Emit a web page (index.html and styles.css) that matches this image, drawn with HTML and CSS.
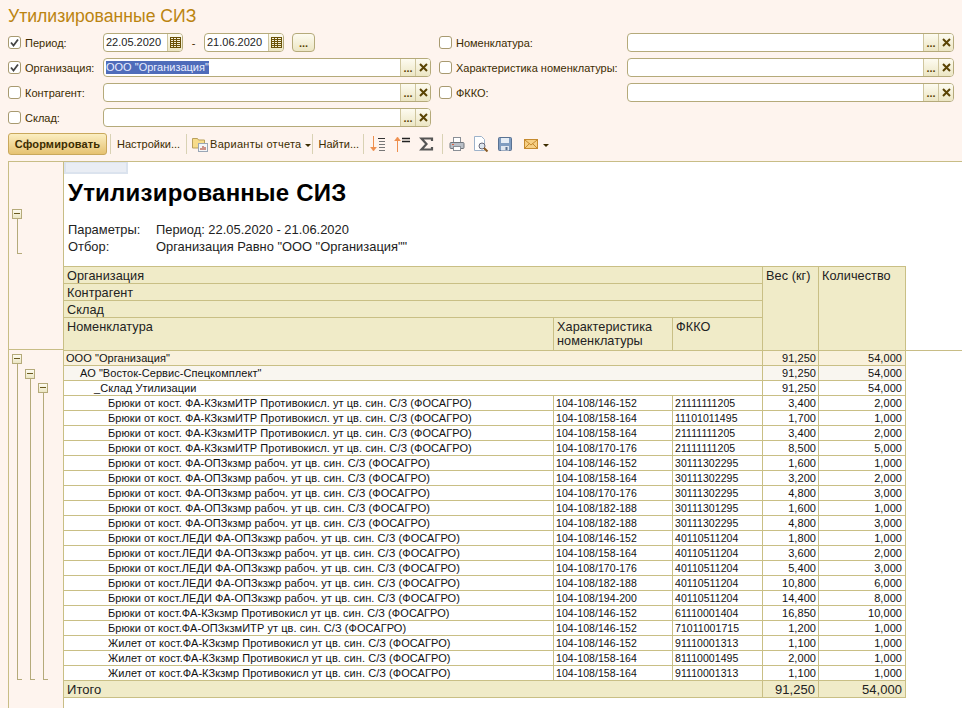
FILE: index.html
```html
<!DOCTYPE html>
<html lang="ru">
<head>
<meta charset="utf-8">
<title>Утилизированные СИЗ</title>
<link rel="stylesheet" href="styles.css">
</head>
<body>
<h1 class="page-title">Утилизированные СИЗ</h1>

<form class="filters">
  <div class="f-col">
    <div class="f-row">
      <span class="chk on"><svg viewBox="0 0 11 11"><path d="M2 5.500l2.500 3L9 2.500" fill="none" stroke="#444" stroke-width="1.800"/></svg></span>
      <label class="lbl">Период:</label>
      <span class="field date"><span class="val">22.05.2020</span><span class="fbtn cal"><svg viewBox="0 0 11 11"><path d="M0 .5h11M0 2.500h11M0 4.500h11M0 6.500h11M0 8.500h11M0 10.500h11M.5 0v11M3.500 0v11M6.500 0v11M10.500 0v11" fill="none" stroke="#6b5208"/></svg></span></span>
      <span class="dash">-</span>
      <span class="field date"><span class="val">21.06.2020</span><span class="fbtn cal"><svg viewBox="0 0 11 11"><path d="M0 .5h11M0 2.500h11M0 4.500h11M0 6.500h11M0 8.500h11M0 10.500h11M.5 0v11M3.500 0v11M6.500 0v11M10.500 0v11" fill="none" stroke="#6b5208"/></svg></span></span>
      <button type="button" class="more">...</button>
    </div>
    <div class="f-row">
      <span class="chk on"><svg viewBox="0 0 11 11"><path d="M2 5.500l2.500 3L9 2.500" fill="none" stroke="#444" stroke-width="1.800"/></svg></span>
      <label class="lbl">Организация:</label>
      <span class="field wide"><span class="val"><span class="sel">ООО "Организация"</span></span><span class="fbtn dots">...</span><span class="fbtn x"><svg viewBox="0 0 9 9"><path d="M1 1l7 7M8 1L1 8" fill="none" stroke="#5a4404" stroke-width="2"/></svg></span></span>
    </div>
    <div class="f-row">
      <span class="chk"></span>
      <label class="lbl">Контрагент:</label>
      <span class="field wide"><span class="val"></span><span class="fbtn dots">...</span><span class="fbtn x"><svg viewBox="0 0 9 9"><path d="M1 1l7 7M8 1L1 8" fill="none" stroke="#5a4404" stroke-width="2"/></svg></span></span>
    </div>
    <div class="f-row">
      <span class="chk"></span>
      <label class="lbl">Склад:</label>
      <span class="field wide"><span class="val"></span><span class="fbtn dots">...</span><span class="fbtn x"><svg viewBox="0 0 9 9"><path d="M1 1l7 7M8 1L1 8" fill="none" stroke="#5a4404" stroke-width="2"/></svg></span></span>
    </div>
  </div>
  <div class="f-col right">
    <div class="f-row">
      <span class="chk"></span>
      <label class="lbl">Номенклатура:</label>
      <span class="field wide"><span class="val"></span><span class="fbtn dots">...</span><span class="fbtn x"><svg viewBox="0 0 9 9"><path d="M1 1l7 7M8 1L1 8" fill="none" stroke="#5a4404" stroke-width="2"/></svg></span></span>
    </div>
    <div class="f-row">
      <span class="chk"></span>
      <label class="lbl">Характеристика номенклатуры:</label>
      <span class="field wide"><span class="val"></span><span class="fbtn dots">...</span><span class="fbtn x"><svg viewBox="0 0 9 9"><path d="M1 1l7 7M8 1L1 8" fill="none" stroke="#5a4404" stroke-width="2"/></svg></span></span>
    </div>
    <div class="f-row">
      <span class="chk"></span>
      <label class="lbl">ФККО:</label>
      <span class="field wide"><span class="val"></span><span class="fbtn dots">...</span><span class="fbtn x"><svg viewBox="0 0 9 9"><path d="M1 1l7 7M8 1L1 8" fill="none" stroke="#5a4404" stroke-width="2"/></svg></span></span>
    </div>
  </div>
</form>

<div class="toolbar">
  <button type="button" class="primary">Сформировать</button>
  <span class="sep"></span>
  <span class="tb">Настройки...</span>
  <span class="sep"></span>
  <span class="tb tb-variants"><svg class="ico16" viewBox="0 0 16 16"><path d="M.5 2.500h5l1 1.500h6v8h-12z" fill="#f7dc8a" stroke="#b9a05c"/><rect x="6.500" y="7.500" width="9" height="8" fill="#f4f6f8" stroke="#9aa6b5"/><path d="M9 14v-2M11 14v-4M13 14v-3" stroke="#b3503f" stroke-width="1.200"/></svg><span class="tb-text">Варианты отчета</span><span class="caret"></span></span>
  <span class="sep"></span>
  <span class="tb tb-find">Найти...</span>
  <span class="sep"></span>
  <div class="tb-icons">
    <svg class="ico16" viewBox="0 0 16 16"><path d="M3.500 0v14" stroke="#ee8f4e"/><path d="M.5 11l3 4 3-4" fill="#ee8f4e" stroke="#ee8f4e" stroke-width=".6"/><path d="M8 2.500h7" stroke="#333"/><path d="M9 5.500h6M9 8.500h6M9 11.500h6M9 14.500h6" stroke="#777"/></svg>
    <svg class="ico16" viewBox="0 0 16 16"><path d="M3.500 16V3" stroke="#ee8f4e"/><path d="M.5 5l3-4 3 4" fill="#ee8f4e" stroke="#ee8f4e" stroke-width=".6"/><path d="M8 2.500h8M8 5.500h8" stroke="#222" stroke-width="1.400"/></svg>
    <svg class="ico16" viewBox="0 0 16 16"><path d="M14 5V2.500H3.500L8.500 8l-5 5.500H14V11" fill="none" stroke="#555" stroke-width="2.200"/></svg>
    <span class="sep"></span>
    <svg class="ico16" viewBox="0 0 16 16"><rect x="4.500" y="1.500" width="7" height="5" fill="#fff" stroke="#8a8f96"/><rect x="1" y="6.500" width="14" height="6" rx="1" fill="#b9bfc7" stroke="#70767d"/><rect x="4.500" y="10.500" width="7" height="4" fill="#fff" stroke="#8a8f96"/><path d="M3 8.500h2" stroke="#d9603f"/></svg>
    <svg class="ico16" viewBox="0 0 16 16"><path d="M1.500 .5h7l3 3v11h-10z" fill="#fff" stroke="#9db2ca"/><circle cx="9" cy="10" r="3" fill="#dde6ef" stroke="#667"/><path d="M11 12l3.500 3.500" stroke="#8a5a22" stroke-width="2"/></svg>
    <svg class="ico16" viewBox="0 0 16 16"><rect x="1.500" y="1.500" width="13" height="13" rx="1" fill="#7f9cc0" stroke="#5a7292"/><rect x="4" y="2" width="8" height="5" fill="#e6edf5"/><rect x="4" y="10" width="8" height="4.500" fill="#dfe6ef"/><rect x="8.500" y="11" width="2" height="3" fill="#5a7292"/></svg>
    <span class="mail"><svg class="ico16" viewBox="0 0 16 16"><rect x="1.500" y="3.500" width="13" height="9" fill="#f6cf84" stroke="#c58a2f"/><path d="M2 4l6 5 6-5M2 12l4.500-4.500M14 12L9.500 7.500" fill="none" stroke="#c58a2f"/></svg><span class="caret"></span></span>
  </div>
</div>

<section class="report">
  <aside class="gutter">
    <div class="gutter-head">
      <span class="node n0"></span>
      <span class="branch b-head"></span>
    </div>
    <div class="gutter-body">
      <span class="node n1"></span>
      <span class="node n2"></span>
      <span class="node n3"></span>
      <span class="branch b1"></span>
      <span class="branch b2"></span>
      <span class="branch b3"></span>
    </div>
  </aside>
  <div class="sheet">
    <div class="cursor"></div>
    <h2 class="rep-title">Утилизированные СИЗ</h2>
    <dl class="params">
      <dt>Параметры:</dt><dd>Период: 22.05.2020 - 21.06.2020</dd>
      <dt>Отбор:</dt><dd>Организация Равно "ООО "Организация""</dd>
    </dl>
    <div class="rule"></div>
    <table class="grid">
      <colgroup><col class="c1"><col class="c2"><col class="c3"><col class="c4"><col class="c5"></colgroup>
      <thead>
        <tr class="h17"><th colspan="3">Организация</th><th rowspan="4">Вес (кг)</th><th rowspan="4">Количество</th></tr>
        <tr class="h17"><th colspan="3">Контрагент</th></tr>
        <tr class="h17"><th colspan="3">Склад</th></tr>
        <tr class="h33"><th>Номенклатура</th><th>Характеристика номенклатуры</th><th>ФККО</th></tr>
      </thead>
      <tbody>
        <tr class="g1"><td colspan="3" class="l0">ООО "Организация"</td><td class="n">91,250</td><td class="n">54,000</td></tr>
        <tr class="g2"><td colspan="3" class="l1">АО "Восток-Сервис-Спецкомплект"</td><td class="n">91,250</td><td class="n">54,000</td></tr>
        <tr><td colspan="3" class="l2">_Склад Утилизации</td><td class="n">91,250</td><td class="n">54,000</td></tr>
        <tr><td class="l3">Брюки от кост. ФА-КЗкзмИТР Противокисл. ут цв. син. С/З (ФОСАГРО)</td><td class="code">104-108/146-152</td><td class="code">21111111205</td><td class="n">3,400</td><td class="n">2,000</td></tr>
        <tr><td class="l3">Брюки от кост. ФА-КЗкзмИТР Противокисл. ут цв. син. С/З (ФОСАГРО)</td><td class="code">104-108/158-164</td><td class="code">11101011495</td><td class="n">1,700</td><td class="n">1,000</td></tr>
        <tr><td class="l3">Брюки от кост. ФА-КЗкзмИТР Противокисл. ут цв. син. С/З (ФОСАГРО)</td><td class="code">104-108/158-164</td><td class="code">21111111205</td><td class="n">3,400</td><td class="n">2,000</td></tr>
        <tr><td class="l3">Брюки от кост. ФА-КЗкзмИТР Противокисл. ут цв. син. С/З (ФОСАГРО)</td><td class="code">104-108/170-176</td><td class="code">21111111205</td><td class="n">8,500</td><td class="n">5,000</td></tr>
        <tr><td class="l3">Брюки от кост. ФА-ОПЗкзмр рабоч. ут цв. син. С/З (ФОСАГРО)</td><td class="code">104-108/146-152</td><td class="code">30111302295</td><td class="n">1,600</td><td class="n">1,000</td></tr>
        <tr><td class="l3">Брюки от кост. ФА-ОПЗкзмр рабоч. ут цв. син. С/З (ФОСАГРО)</td><td class="code">104-108/158-164</td><td class="code">30111302295</td><td class="n">3,200</td><td class="n">2,000</td></tr>
        <tr><td class="l3">Брюки от кост. ФА-ОПЗкзмр рабоч. ут цв. син. С/З (ФОСАГРО)</td><td class="code">104-108/170-176</td><td class="code">30111302295</td><td class="n">4,800</td><td class="n">3,000</td></tr>
        <tr><td class="l3">Брюки от кост. ФА-ОПЗкзмр рабоч. ут цв. син. С/З (ФОСАГРО)</td><td class="code">104-108/182-188</td><td class="code">30111301295</td><td class="n">1,600</td><td class="n">1,000</td></tr>
        <tr><td class="l3">Брюки от кост. ФА-ОПЗкзмр рабоч. ут цв. син. С/З (ФОСАГРО)</td><td class="code">104-108/182-188</td><td class="code">30111302295</td><td class="n">4,800</td><td class="n">3,000</td></tr>
        <tr><td class="l3">Брюки от кост.ЛЕДИ ФА-ОПЗкзжр рабоч. ут цв. син. С/З (ФОСАГРО)</td><td class="code">104-108/146-152</td><td class="code">40110511204</td><td class="n">1,800</td><td class="n">1,000</td></tr>
        <tr><td class="l3">Брюки от кост.ЛЕДИ ФА-ОПЗкзжр рабоч. ут цв. син. С/З (ФОСАГРО)</td><td class="code">104-108/158-164</td><td class="code">40110511204</td><td class="n">3,600</td><td class="n">2,000</td></tr>
        <tr><td class="l3">Брюки от кост.ЛЕДИ ФА-ОПЗкзжр рабоч. ут цв. син. С/З (ФОСАГРО)</td><td class="code">104-108/170-176</td><td class="code">40110511204</td><td class="n">5,400</td><td class="n">3,000</td></tr>
        <tr><td class="l3">Брюки от кост.ЛЕДИ ФА-ОПЗкзжр рабоч. ут цв. син. С/З (ФОСАГРО)</td><td class="code">104-108/182-188</td><td class="code">40110511204</td><td class="n">10,800</td><td class="n">6,000</td></tr>
        <tr><td class="l3">Брюки от кост.ЛЕДИ ФА-ОПЗкзжр рабоч. ут цв. син. С/З (ФОСАГРО)</td><td class="code">104-108/194-200</td><td class="code">40110511204</td><td class="n">14,400</td><td class="n">8,000</td></tr>
        <tr><td class="l3">Брюки от кост.ФА-КЗкзмр Противокисл ут цв. син. С/З (ФОСАГРО)</td><td class="code">104-108/146-152</td><td class="code">61110001404</td><td class="n">16,850</td><td class="n">10,000</td></tr>
        <tr><td class="l3">Брюки от кост.ФА-ОПЗкзмИТР ут цв. син. С/З (ФОСАГРО)</td><td class="code">104-108/146-152</td><td class="code">71011001715</td><td class="n">1,200</td><td class="n">1,000</td></tr>
        <tr><td class="l3">Жилет от кост.ФА-КЗкзмр Противокисл ут цв. син. С/З (ФОСАГРО)</td><td class="code">104-108/146-152</td><td class="code">91110001313</td><td class="n">1,100</td><td class="n">1,000</td></tr>
        <tr><td class="l3">Жилет от кост.ФА-КЗкзмр Противокисл ут цв. син. С/З (ФОСАГРО)</td><td class="code">104-108/158-164</td><td class="code">81110001495</td><td class="n">2,000</td><td class="n">1,000</td></tr>
        <tr><td class="l3">Жилет от кост.ФА-КЗкзмр Противокисл ут цв. син. С/З (ФОСАГРО)</td><td class="code">104-108/158-164</td><td class="code">91110001313</td><td class="n">1,100</td><td class="n">1,000</td></tr>
      </tbody>
      <tfoot>
        <tr class="total"><td colspan="3">Итого</td><td class="n">91,250</td><td class="n">54,000</td></tr>
      </tfoot>
    </table>
  </div>
</section>
</body>
</html>
```
FILE: styles.css
```css
* { box-sizing: border-box; }
html, body { margin: 0; height: 708px; overflow: hidden; }
body {
  background: #fef4ee;
  font-family: "Liberation Sans", Arial, sans-serif;
  font-size: 11px;
  color: #3c2c00;
  display: flex;
  flex-direction: column;
}
.page-title {
  margin: 0;
  padding: 6px 0 0 8px;
  height: 33px;
  font-size: 17.6px;
  line-height: 20px;
  font-weight: normal;
  color: #bb8410;
}
.filters { display: flex; height: 100px; flex: none; }
.f-col { width: 439px; padding-left: 8px; display: flex; flex-direction: column; gap: 6px; }
.f-col.right { width: 523px; padding-left: 0; }
.f-row { display: flex; align-items: center; height: 19px; }
.chk {
  width: 13px; height: 13px; flex: none;
  border: 1px solid #a89a70; border-radius: 3px; background: #fff;
  display: block;
}
.chk svg { display: block; width: 11px; height: 11px; }
.lbl { width: 82px; padding-left: 4px; font-size: 11px; white-space: nowrap; }
.right .lbl { width: 175px; padding-left: 4px; }
.field {
  height: 19px; display: flex;
  border: 1px solid #b5aa7a; border-radius: 4px; background: #fff;
  overflow: hidden;
  font-size: 11px; color: #222;
}
.field.wide { width: 328px; }
.right .field.wide { width: 327px; }
.field.date { width: 80px; }
.val { flex: 1; padding: 0 2px; line-height: 17px; white-space: nowrap; overflow: hidden; }
.sel { background: #4f6cba; color: #e9eeff; display: inline-block; line-height: 13px; }
.fbtn {
  flex: none; width: 15px;
  background: linear-gradient(#fdfbf0, #ece6c4);
  border-left: 1px solid #cfc69e;
  color: #5a4404; text-align: center; line-height: 19px; font-weight: bold;
}
.fbtn.x, .fbtn.cal { display: flex; align-items: center; justify-content: center; }
.fbtn.x svg { width: 9px; height: 9px; }
.cal svg { width: 11px; height: 11px; }
.dash { width: 21px; text-align: center; }
.more {
  margin-left: 8px; width: 23px; height: 19px; padding: 0;
  border: 1px solid #b5aa7a; border-radius: 4px;
  background: linear-gradient(#fdfbf0, #ece6c4);
  font: bold 11px "Liberation Sans", sans-serif; color: #5a4404;
}
.toolbar {
  height: 22px; margin-bottom: 6px; padding: 0 0 0 8px; display: flex; align-items: center;
  flex: none;
}
.primary {
  width: 99px; height: 22px; padding: 0; margin-right: 3px;
  border: 1px solid #c9a85c; border-radius: 3px;
  background: linear-gradient(#fbeec2, #e6c271);
  font: bold 11px "Liberation Sans", sans-serif; letter-spacing: .15px; color: #3c2c00;
}
.sep { width: 1px; height: 20px; background: #d9d2b4; flex: none; }
.tb { display: inline-flex; align-items: center; white-space: nowrap; padding: 0 6px; }
.tb-variants { padding: 0 0 0 5px; }
.tb-text { margin-left: 2px; letter-spacing: .27px; }
.tb-find { padding: 0 4px 0 6px; }
.tb-icons { display: flex; align-items: center; gap: 8px; margin-left: 6px; }
.tb-icons .sep { margin-right: -2px; }
.ico16 { width: 16px; height: 16px; flex: none; display: block; }
.caret {
  display: inline-block; margin: 2px 1px 0 3px;
  border: 3px solid transparent; border-top: 3px solid #3c2c00; border-bottom: 0;
}
.mail { display: inline-flex; align-items: center; margin-left: 2px; }
.mail .caret { margin-left: 4px; }
.report {
  flex: 1; min-height: 0; display: flex;
  margin-left: 8px;
  border-top: 1px solid #c8bd86;
  border-left: 1px solid #c8bd86;
}
.gutter { width: 55px; flex: none; border-right: 1px solid #c8bd86; display: flex; flex-direction: column; }
.gutter-head { height: 188px; position: relative; border-bottom: 1px solid #c8bd86; flex: none; }
.gutter-body { flex: 1; position: relative; }
.node {
  position: absolute; width: 10px; height: 10px;
  border: 1px solid #b5aa7a; background: linear-gradient(#fdfbf0, #ece6c4);
}
.node::after { content: ""; position: absolute; left: 1px; right: 1px; top: 3px; height: 1px; background: #6b5a20; }
.n0 { left: 3px; top: 47px; }
.n1 { left: 3px; top: 4px; }
.n2 { left: 16px; top: 19px; }
.n3 { left: 29px; top: 33px; }
.branch { position: absolute; width: 5px; border-left: 1px solid #b5aa7a; border-bottom: 1px solid #b5aa7a; }
.b-head { left: 8px; top: 57px; height: 35px; }
.b1 { left: 8px; top: 14px; height: 316px; }
.b2 { left: 21px; top: 29px; height: 301px; }
.b3 { left: 34px; top: 43px; height: 287px; }
.sheet { flex: 1; background: #fff; position: relative; color: #000; min-width: 0; }
.cursor {
  position: absolute; left: 0; top: 0; width: 64px; height: 12px;
  background: #e9edf4; border: 2px solid #dbe3ee; border-top-width: 1px;
}
.rep-title { margin: 0; padding: 17px 0 0 4px; height: 59px; font-size: 24px; line-height: 28px; font-weight: bold; letter-spacing: .22px; }
.params {
  margin: 0; padding-left: 4px; display: grid; grid-template-columns: 88px 1fr; grid-auto-rows: 17px;
  font-size: 12.9px; line-height: 17px; color: #222;
}
.params dt, .params dd { margin: 0; }
.rule { position: absolute; left: 0; right: 0; top: 188px; height: 1px; background: #c8bd86; }
.grid {
  position: relative;
  margin: 11px 0 0 -1px;
  width: 842px; table-layout: fixed; border-collapse: collapse;
  font-size: 11px; letter-spacing: .06px; color: #111;
}
.c1 { width: 490px; } .c2 { width: 119px; } .c3 { width: 90px; } .c4 { width: 56px; } .c5 { width: 87px; }
.grid th, .grid td { border: 1px solid #c9bf85; padding: 0 2px; overflow: hidden; white-space: nowrap; }
.grid th {
  background: #f0ebc8; font-weight: normal; text-align: left; vertical-align: top;
  font-size: 12.7px; line-height: 14px; padding: 2px 3px 0; color: #222; white-space: normal;
}
.h17 th { height: 17px; }
.h33 th { height: 33px; }
.grid td { height: 15px; line-height: 13px; }
.grid .code { font-size: 10.5px; }
.g1 td { background: #f9f1dc; }
.g2 td { background: #f9f6f0; }
.n { text-align: right; }
.grid td.n:last-child { padding-right: 3px; }
.l0 { padding-left: 1px; }
.grid .l1 { padding-left: 16px; }
.grid .l2 { padding-left: 30px; }
.grid .l3 { padding-left: 44px; }
.grid .total td { background: #f0ebc8; height: 17px; font-size: 13px; color: #222; line-height: 15px; padding: 0 3px; }
```
